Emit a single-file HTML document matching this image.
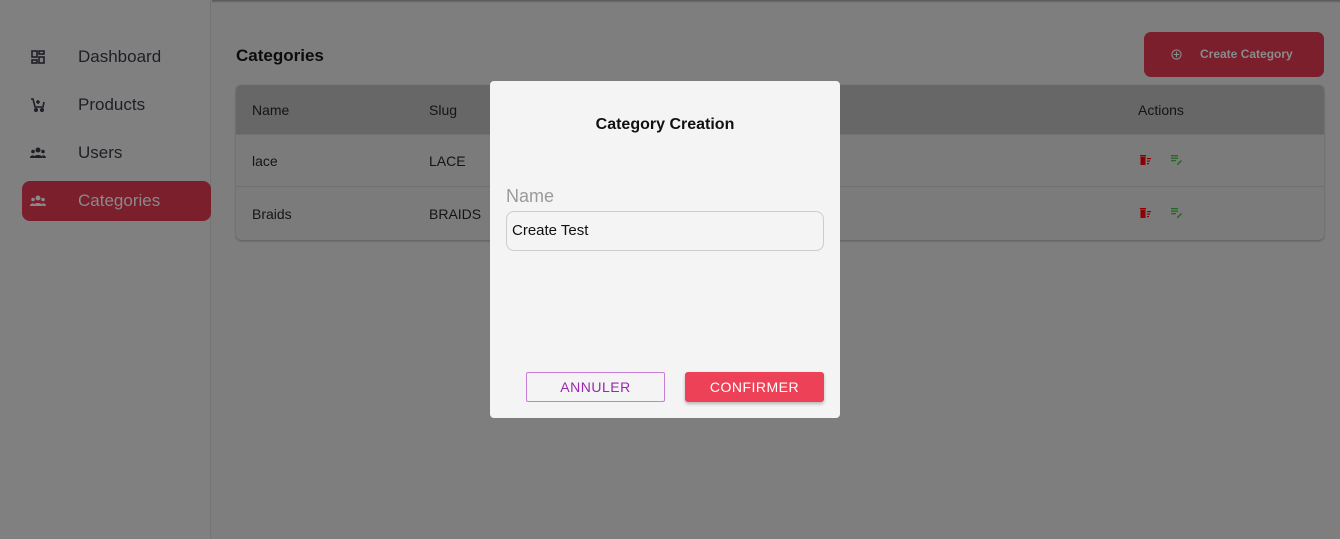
<!DOCTYPE html>
<html><head><style>
*{margin:0;padding:0;box-sizing:border-box}
body{width:1340px;height:539px;overflow:hidden;background:#7e7e7e;font-family:"Liberation Sans",sans-serif;position:relative}
.side{position:absolute;left:0;top:0;width:211px;height:539px;background:#808080;border-right:1px solid #747474}
.nav{position:absolute;left:22px;width:189px;height:40px;border-radius:8px;color:#1e1e26;font-size:17px}
.nav span{position:absolute;left:56px;top:10px}
.nav svg{position:absolute;left:8px;top:12px}
.act{background:#7a1f2b;color:#8a8a8a}
.topsh{position:absolute;left:212px;top:0;right:0;height:3px;background:linear-gradient(#555,#7e7e7e)}
h2{position:absolute;left:236px;top:46px;font-size:17px;font-weight:bold;color:#0c0c0c}
.cbtn{position:absolute;left:1144px;top:32px;width:180px;height:45px;border-radius:7px;background:#7a1f2b;color:#8c8c8c;font-size:12px;font-weight:bold}
.tbl{position:absolute;left:236px;top:85px;width:1088px;height:155px;border-radius:5px;overflow:hidden;background:#7b7b7b;box-shadow:0 1px 2px #5a5a5a}
.th{height:50px;background:#676767;border-bottom:1px solid #707070}
.row{height:52px;border-bottom:1px solid #707070}
.t{position:absolute;font-size:14px;color:#141414}
.modal{position:absolute;left:490px;top:81px;width:350px;height:337px;background:#f4f4f4;border-radius:4px}
</style></head><body>
<div class="side">
<div class="nav" style="top:37px"><svg width="16" height="16" viewBox="0 0 16 16" fill="none" stroke="#1e1e26" stroke-width="1.6"><rect x="2" y="2" width="5" height="6"/><rect x="9" y="2" width="5" height="3"/><rect x="9" y="8" width="5" height="6"/><rect x="2" y="11" width="5" height="3"/></svg><span>Dashboard</span></div>
<div class="nav" style="top:85px"><svg width="16" height="16" viewBox="0 0 16 16" fill="none" stroke="#1e1e26" stroke-width="1.6"><path d="M1 2h2l2 8h8l1-5M8 3v4M6 5h4"/><circle cx="6" cy="13" r="1.2" fill="#1e1e26"/><circle cx="12" cy="13" r="1.2" fill="#1e1e26"/></svg><span>Products</span></div>
<div class="nav" style="top:133px"><svg width="16" height="16" viewBox="0 0 16 16" fill="#1e1e26"><circle cx="8" cy="5" r="2.5"/><circle cx="3" cy="6.5" r="1.8"/><circle cx="13" cy="6.5" r="1.8"/><path d="M3.5 13c0-4 9-4 9 0zM0 13c0-3 4-3 4-2v2zM16 13c0-3-4-3-4-2v2z"/></svg><span>Users</span></div>
<div class="nav act" style="top:181px"><svg width="16" height="16" viewBox="0 0 16 16" fill="#8a8a8a"><circle cx="8" cy="5" r="2.5"/><circle cx="3" cy="6.5" r="1.8"/><circle cx="13" cy="6.5" r="1.8"/><path d="M3.5 13c0-4 9-4 9 0zM0 13c0-3 4-3 4-2v2zM16 13c0-3-4-3-4-2v2z"/></svg><span>Categories</span></div>
</div>
<div class="topsh"></div>
<h2>Categories</h2>
<div class="cbtn"><svg style="position:absolute;left:27px;top:17px" width="11" height="11" viewBox="0 0 12 12" fill="none" stroke="#8c8c8c" stroke-width="1.2"><circle cx="6" cy="6" r="5"/><path d="M6 3v6M3 6h6"/></svg><span style="position:absolute;left:56px;top:15px">Create Category</span></div>
<div class="tbl"><div class="th"></div><div class="row"></div><div class="row" style="border:0"></div></div>
<div class="t" style="left:252px;top:102px">Name</div>
<div class="t" style="left:429px;top:102px">Slug</div>
<div class="t" style="left:1138px;top:102px">Actions</div>
<div class="t" style="left:252px;top:153px">lace</div>
<div class="t" style="left:429px;top:153px">LACE</div>
<div class="t" style="left:252px;top:206px">Braids</div>
<div class="t" style="left:429px;top:206px">BRAIDS</div>
<svg style="position:absolute;left:1140px;top:155px" width="12" height="10" viewBox="0 0 12 10" fill="#8b0000"><rect x="0" y="0" width="6" height="1.5"/><rect x="0.5" y="2" width="5" height="8"/><rect x="7" y="3" width="4" height="1.2"/><rect x="7" y="5.5" width="3" height="1.2"/><rect x="7" y="8" width="2" height="1.2"/></svg>
<svg style="position:absolute;left:1171px;top:155px" width="12" height="10" viewBox="0 0 12 10" fill="#1e6b1e"><rect x="0" y="0" width="7" height="1.3"/><rect x="0" y="2.5" width="7" height="1.3"/><rect x="0" y="5" width="5" height="1.3"/><path d="M6 9l4-4 1 1-4 4H6z"/></svg>
<svg style="position:absolute;left:1140px;top:208px" width="12" height="10" viewBox="0 0 12 10" fill="#8b0000"><rect x="0" y="0" width="6" height="1.5"/><rect x="0.5" y="2" width="5" height="8"/><rect x="7" y="3" width="4" height="1.2"/><rect x="7" y="5.5" width="3" height="1.2"/><rect x="7" y="8" width="2" height="1.2"/></svg>
<svg style="position:absolute;left:1171px;top:208px" width="12" height="10" viewBox="0 0 12 10" fill="#1e6b1e"><rect x="0" y="0" width="7" height="1.3"/><rect x="0" y="2.5" width="7" height="1.3"/><rect x="0" y="5" width="5" height="1.3"/><path d="M6 9l4-4 1 1-4 4H6z"/></svg>
<div class="modal">
<div style="position:absolute;left:0;width:350px;top:35px;text-align:center;font-weight:bold;font-size:16px;color:#111">Category Creation</div>
<div style="position:absolute;left:16px;top:105px;font-size:18px;color:#9a9a9a">Name</div>
<div style="position:absolute;left:16px;top:130px;width:318px;height:40px;border:1px solid #ccc;border-radius:8px;padding:10px 5px;font-size:15px;color:#111">Create Test</div>
<div style="position:absolute;left:36px;top:291px;width:139px;height:30px;border:1px solid #c77fd8;border-radius:2px;color:#9c27b0;font-size:14px;text-align:center;line-height:28px;letter-spacing:.5px">ANNULER</div>
<div style="position:absolute;left:195px;top:291px;width:139px;height:30px;background:#ec4156;border-radius:3px;color:#fff;font-size:14px;text-align:center;line-height:30px;letter-spacing:.5px;box-shadow:0 2px 3px rgba(0,0,0,.25)">CONFIRMER</div>
</div>
</body></html>
